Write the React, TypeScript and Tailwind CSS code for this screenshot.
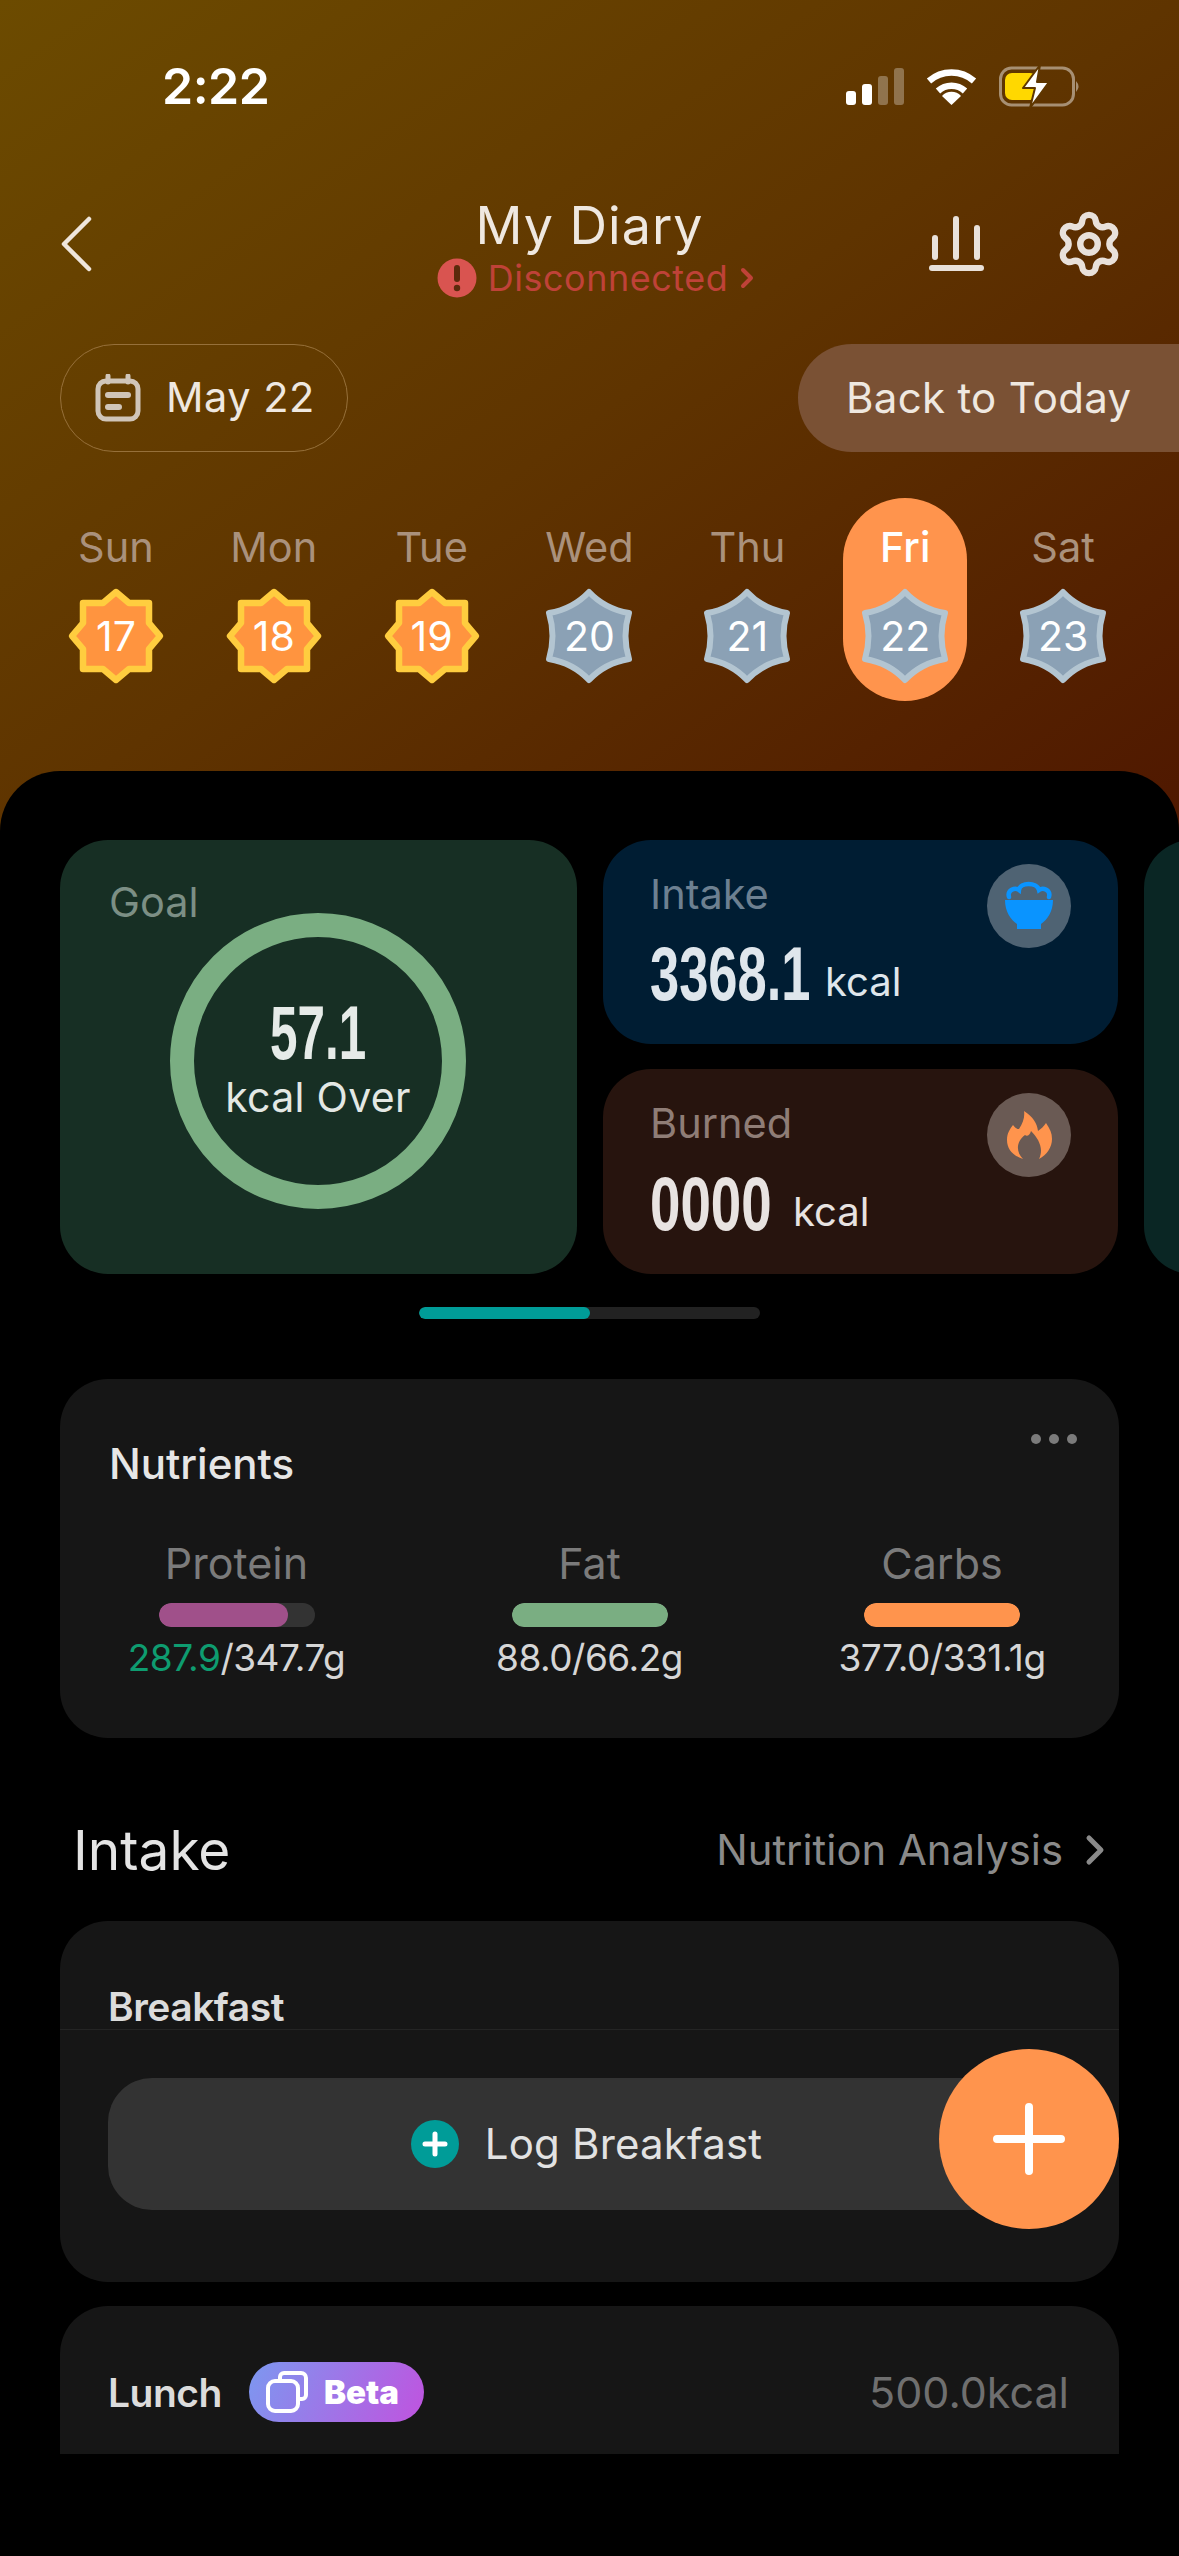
import React from 'react';
import { Settings } from 'lucide-react';

const days = [
  { d: 'Sun', n: 17, on: true },
  { d: 'Mon', n: 18, on: true },
  { d: 'Tue', n: 19, on: true },
  { d: 'Wed', n: 20, on: false },
  { d: 'Thu', n: 21, on: false },
  { d: 'Fri', n: 22, on: false, today: true },
  { d: 'Sat', n: 23, on: false },
];

function Badge({ n, on }: { n: number; on: boolean }) {
  return (
    <div className="relative w-[100px] h-[100px] flex items-center justify-center">
      <svg viewBox="-50 -50 100 100" className="absolute inset-0 w-full h-full">
        {on ? (
          <path
            d="M0 -44 L13 -33 L33 -33 L33 -13 L44 0 L33 13 L33 33 L13 33 L0 44 L-13 33 L-33 33 L-33 13 L-44 0 L-33 -13 L-33 -33 L-13 -33 Z"
            fill="#ff943f"
            stroke="#ffcd3f"
            strokeWidth="6.5"
            strokeLinejoin="round"
          />
        ) : (
          <path
            d="M0 -44 Q16 -27 40 -23 Q33 0 40 23 Q16 27 0 44 Q-16 27 -40 23 Q-33 0 -40 -23 Q-16 -27 0 -44 Z"
            fill="#8ba1b5"
            stroke="#b3c5d1"
            strokeWidth="6"
            strokeLinejoin="round"
          />
        )}
      </svg>
      <span className="relative text-[41px] leading-none text-white">{n}</span>
    </div>
  );
}

function BigNum({ children, box, sx }: { children: React.ReactNode; box: string; sx: string }) {
  return (
    <span className={`inline-block ${box}`}>
      <span className={`inline-block origin-left ${sx} [font-family:'Liberation_Sans',sans-serif] font-bold text-[76px] leading-[74px] whitespace-nowrap`}>
        {children}
      </span>
    </span>
  );
}

function Nutrient({ label, value, green, pct, color }: { label: string; value: string; green?: string; pct: number; color: string }) {
  return (
    <div className="flex flex-col items-center">
      <div className="text-[43px] leading-[48px] text-[#7b7b7b]">{label}</div>
      <div className="mt-[16px] w-[156px] h-[24px] rounded-full bg-[#333333] overflow-hidden">
        <div className="h-full rounded-full" style={{ width: `${pct}%`, backgroundColor: color }} />
      </div>
      <div className="mt-[9px] text-[37px] leading-[44px] text-[#d6d6d6] whitespace-nowrap tracking-[-0.5px]">
        {green && <span className="text-[#0e9c70]">{green}</span>}
        {value}
      </div>
    </div>
  );
}

export default function App() {
  return (
    <div className="relative w-[1179px] h-[2556px] overflow-hidden flex flex-col bg-black bg-no-repeat bg-[length:100%_840px] bg-[linear-gradient(to_bottom_right,#6c4b00_0%,#5f3400_50%,#4f1700_100%)] [font-family:Inter,'Liberation_Sans',sans-serif]">
      <header className="h-[771px] shrink-0 flex flex-col">
        <div className="mt-[56px] h-[60px] flex items-center justify-between pl-[162px] pr-[98px]">
          <span className="text-[50px] font-semibold text-white leading-none tracking-[-0.5px]">2:22</span>
          <div className="flex items-center gap-[22px]">
            <div className="flex items-end gap-[6px] h-[37px]">
              <div className="w-[10px] h-[14px] rounded-[3px] bg-white" />
              <div className="w-[10px] h-[21px] rounded-[3px] bg-white" />
              <div className="w-[10px] h-[29px] rounded-[3px] bg-white/30" />
              <div className="w-[10px] h-[37px] rounded-[3px] bg-white/30" />
            </div>
            <svg viewBox="0 0 51 37" className="w-[51px] h-[37px]" fill="none" stroke="#fff">
              <path d="M3 13 A34 34 0 0 1 48 13" strokeWidth="6.5" />
              <path d="M12 23 A20 20 0 0 1 39 23" strokeWidth="6.5" />
              <path d="M25.5 37 L16 28 A13 13 0 0 1 35 28 Z" fill="#fff" stroke="none" />
            </svg>
            <svg viewBox="0 0 82 44" className="w-[82px] h-[44px]" fill="none">
              <rect x="1.5" y="4" width="73" height="37" rx="11" stroke="#fff" strokeOpacity="0.45" strokeWidth="3" />
              <rect x="6" y="9" width="32" height="27" rx="7" fill="#ffd800" />
              <path d="M77 17 Q82 22.5 77 28 Z" fill="#fff" fillOpacity="0.45" />
              <path d="M41 1 L24 24 L36 24 L31 44 L50 18 L38 18 Z" fill="#fff" stroke="#5f3700" strokeWidth="2" strokeLinejoin="round" />
            </svg>
          </div>
        </div>

        <nav className="mt-[72px] h-[106px] grid grid-cols-[1fr_auto_1fr] items-center pl-[60px] pr-[60px]">
          <svg viewBox="0 0 32 56" className="w-[32px] h-[56px]" fill="none" stroke="#efe6dc" strokeWidth="4.5" strokeLinecap="round" strokeLinejoin="round">
            <path d="M29 3 L4 28 L29 53" />
          </svg>
          <div className="flex flex-col items-center pt-[8px]">
            <div className="text-[52px] leading-[60px] text-[#efe8e0] tracking-[1px]">My Diary</div>
            <div className="flex items-center gap-[11px] h-[44px] pl-[12px]">
              <svg viewBox="0 0 40 40" className="w-[40px] h-[40px]">
                <circle cx="20" cy="20" r="19.5" fill="#d95450" />
                <rect x="17" y="7" width="6" height="17" rx="3" fill="#5b2a0c" />
                <circle cx="20" cy="30" r="3.2" fill="#5b2a0c" />
              </svg>
              <span className="text-[36px] leading-none text-[#bf4238] tracking-[0.5px]">Disconnected</span>
              <svg viewBox="0 0 14 22" className="w-[14px] h-[22px] ml-[1px]" fill="none" stroke="#bf4238" strokeWidth="4" strokeLinecap="round" strokeLinejoin="round">
                <path d="M3 3 L11 11 L3 19" />
              </svg>
            </div>
          </div>
          <div className="flex items-center justify-end gap-[69px]">
            <svg viewBox="0 0 56 56" className="w-[56px] h-[56px]" fill="#e9e1da">
              <rect x="3" y="19" width="6" height="25" rx="3" />
              <rect x="24" y="0" width="6" height="44" rx="3" />
              <rect x="45" y="9" width="6" height="35" rx="3" />
              <rect x="0" y="49" width="55" height="6" rx="3" />
            </svg>
            <Settings className="w-[70px] h-[70px] mr-[-5px] text-[#e9e1da]" strokeWidth={2.2} />
          </div>
        </nav>

        <div className="mt-[50px] flex items-center justify-between pl-[60px]">
          <div className="w-[288px] h-[108px] rounded-full border border-[#96703a] flex items-center pl-[34px] gap-[25px]">
            <svg viewBox="0 0 46 48" className="w-[46px] h-[48px]" fill="none" stroke="#d0c5b8" strokeWidth="5" strokeLinecap="round">
              <path d="M13 2 V8 M33 2 V8" />
              <rect x="3" y="7" width="40" height="38" rx="8" />
              <path d="M13 21 H33" strokeWidth="6" />
              <path d="M13 33 H24" strokeWidth="6" />
            </svg>
            <span className="text-[41.5px] leading-none text-[#efe8e0] tracking-[0.5px]">May 22</span>
          </div>
          <div className="w-[381px] h-[108px] rounded-l-full bg-[#7a5134] flex items-center pl-[48px]">
            <span className="text-[42px] leading-none text-[#efe8e0] tracking-[0.3px] whitespace-nowrap">Back to Today</span>
          </div>
        </div>

        <div className="mt-[46px] px-[37px] grid grid-cols-7">
          {days.map((x) => (
            <div key={x.d} className="flex justify-center">
              <div className={`w-[124px] h-[203px] rounded-full flex flex-col items-center pt-[25px] ${x.today ? 'bg-[#ff944d]' : ''}`}>
                <div className={`text-[41.5px] leading-[48px] ${x.today ? 'text-white font-medium' : 'text-[#aa917c]'}`}>{x.d}</div>
                <div className="mt-[15px]">
                  <Badge n={x.n} on={x.on} />
                </div>
              </div>
            </div>
          ))}
        </div>
      </header>

      <main className="relative flex-1 bg-black rounded-t-[60px] pt-[69px]">
        <div className="flex gap-[26px] pl-[60px] h-[434px] overflow-hidden">
          <section className="w-[517px] shrink-0 rounded-[48px] bg-[#172f24] relative pl-[49px] pt-[38px]">
            <div className="text-[41.5px] leading-[48px] text-[#7c8f85]">Goal</div>
            <div className="absolute left-[110px] top-[73px] w-[296px] h-[296px] rounded-full border-[24px] border-[#7aae82] flex flex-col items-center">
              <BigNum box="w-[96px] h-[74px] mt-[59px]" sx="scale-x-[0.65]">
                <span className="text-[#e6ebe8]">57.1</span>
              </BigNum>
              <div className="mt-[2px] text-[41px] leading-[50px] text-[#e3e8e4] whitespace-nowrap tracking-[0.3px]">kcal Over</div>
            </div>
          </section>
          <div className="w-[515px] shrink-0 flex flex-col gap-[25px]">
            <section className="relative h-[204px] rounded-[48px] bg-[#001d33] pl-[47px] pt-[30px]">
              <div className="text-[41.5px] leading-[48px] text-[#6d8091]">Intake</div>
              <div className="mt-[19px] flex items-end gap-[14px]">
                <BigNum box="w-[161px] h-[74px]" sx="scale-x-[0.69]">
                  <span className="text-[#dfe6ec]">3368.1</span>
                </BigNum>
                <span className="text-[40px] leading-[58px] text-[#dfe6ec]">kcal</span>
              </div>
              <div className="absolute right-[47px] top-[24px] w-[84px] h-[84px] rounded-full bg-[#4f6373]">
                <svg viewBox="0 0 84 84" className="w-full h-full">
                  <path d="M22 33 C20 26 28 23 32 26 C33 18 50 18 52 26 C56 23 64 26 62 33" fill="none" stroke="#0a94ff" strokeWidth="4.5" strokeLinecap="round" />
                  <path d="M18 36 H66 C66 48 60 56 54 60 V65 H30 V60 C24 56 18 48 18 36 Z" fill="#0a94ff" />
                </svg>
              </div>
            </section>
            <section className="relative h-[205px] rounded-[48px] bg-[#27140e] pl-[47px] pt-[30px]">
              <div className="text-[41.5px] leading-[48px] text-[#8f7d76]">Burned</div>
              <div className="mt-[20px] flex items-end gap-[18px]">
                <BigNum box="w-[125px] h-[74px]" sx="scale-x-[0.72]">
                  <span className="text-[#e8e3e1]">0000</span>
                </BigNum>
                <span className="text-[40px] leading-[58px] text-[#e8e3e1]">kcal</span>
              </div>
              <div className="absolute right-[47px] top-[24px] w-[84px] h-[84px] rounded-full bg-[#6a5a54]">
                <svg viewBox="0 0 84 84" className="w-full h-full">
                  <path
                    d="M37 18 C46 24 50 30 51 38 C54 36 57 33 59 30 C63 36 65 40 65 46 C65 54 60 62 52 66 C57 56 52 46 44 38 C43 42 40 44 38 42 C30 48 28 58 36 66 C26 63 20 56 20 47 C20 40 23 36 26 32 C28 35 30 36 32 36 C36 30 38 24 37 18 Z"
                    fill="#ff944d"
                  />
                </svg>
              </div>
            </section>
          </div>
          <section className="w-[200px] shrink-0 rounded-[48px] bg-[#0a2624]" />
        </div>

        <div className="mt-[33px] mx-auto w-[341px] h-[12px] rounded-full bg-[#222222] overflow-hidden">
          <div className="w-1/2 h-full bg-[#009c98] rounded-full" />
        </div>

        <section className="relative mt-[60px] mx-[60px] h-[359px] rounded-[48px] bg-[#161616] px-[49px] pt-[61px]">
          <div className="text-[42px] leading-[48px] font-medium text-[#e6e6e6]">Nutrients</div>
          <div className="absolute right-[42px] top-[55px] flex gap-[8px]">
            <div className="w-[10px] h-[10px] rounded-full bg-[#7b7b7b]" />
            <div className="w-[10px] h-[10px] rounded-full bg-[#7b7b7b]" />
            <div className="w-[10px] h-[10px] rounded-full bg-[#7b7b7b]" />
          </div>
          <div className="mt-[51px] mx-[-49px] grid grid-cols-[353px_353px_352px]">
            <Nutrient label="Protein" green="287.9" value="/347.7g" pct={83} color="#a0508a" />
            <Nutrient label="Fat" value="88.0/66.2g" pct={100} color="#7aae82" />
            <Nutrient label="Carbs" value="377.0/331.1g" pct={100} color="#ff944d" />
          </div>
        </section>

        <div className="mt-[83px] h-[58px] flex items-center justify-between pl-[73px] pr-[74px]">
          <span className="text-[55px] leading-none text-[#e4e4e4]">Intake</span>
          <div className="flex items-center gap-[22px]">
            <span className="text-[41.8px] leading-none text-[#8a8a8a] pt-[2px]">Nutrition Analysis</span>
            <svg viewBox="0 0 20 32" className="w-[20px] h-[32px]" fill="none" stroke="#8a8a8a" strokeWidth="5" strokeLinecap="round" strokeLinejoin="round">
              <path d="M4 4 L16 16 L4 28" />
            </svg>
          </div>
        </div>

        <section className="mt-[42px] mx-[60px] h-[361px] rounded-[48px] bg-[#161616] flex flex-col">
          <div className="h-[109px] border-b border-[#242424] pl-[48px] pt-[64px]">
            <div className="text-[39px] leading-[44px] font-semibold text-[#dcdcdc] tracking-[-0.5px]">Breakfast</div>
          </div>
          <div className="mt-[48px] mx-[48px] h-[132px] rounded-[44px] bg-[#333333] flex items-center justify-center gap-[26px] pr-[6px]">
            <svg viewBox="0 0 48 48" className="w-[48px] h-[48px]">
              <circle cx="24" cy="24" r="24" fill="#009c98" />
              <path d="M24 14 V34 M14 24 H34" stroke="#fff" strokeWidth="5" strokeLinecap="round" />
            </svg>
            <span className="text-[42px] leading-none text-[#e2e2e2] tracking-[0.2px]">Log Breakfast</span>
          </div>
        </section>

        <section className="mt-[24px] mx-[60px] h-[148px] rounded-t-[48px] bg-[#161616] flex items-start justify-between pl-[48px] pr-[50px] pt-[56px]">
          <div className="flex items-center gap-[27px] h-[60px]">
            <span className="text-[39px] leading-none font-semibold text-[#dcdcdc] tracking-[-0.5px]">Lunch</span>
            <div className="w-[175px] h-[60px] rounded-full bg-[linear-gradient(115deg,#7c98f0,#c053df)] flex items-center pl-[17px] gap-[16px]">
              <svg viewBox="0 0 42 42" className="w-[42px] h-[42px]" fill="none" stroke="#fff" strokeWidth="4">
                <path d="M14 8 V6 A4 4 0 0 1 18 2 H35 A5 5 0 0 1 40 7 V24 A4 4 0 0 1 36 28 H32" strokeLinejoin="round" />
                <rect x="2" y="10" width="30" height="30" rx="7" />
              </svg>
              <span className="text-[33px] leading-none font-black text-white">Beta</span>
            </div>
          </div>
          <span className="text-[43px] h-[60px] flex items-center leading-none text-[#6f6f6f]">500.0kcal</span>
        </section>

        <button className="absolute right-[60px] top-[1278px] w-[180px] h-[180px] rounded-full bg-[#ff944d] flex items-center justify-center">
          <svg viewBox="0 0 72 72" className="w-[72px] h-[72px]" stroke="#fff" strokeWidth="8" strokeLinecap="round">
            <path d="M36 4 V68 M4 36 H68" />
          </svg>
        </button>
      </main>
    </div>
  );
}
